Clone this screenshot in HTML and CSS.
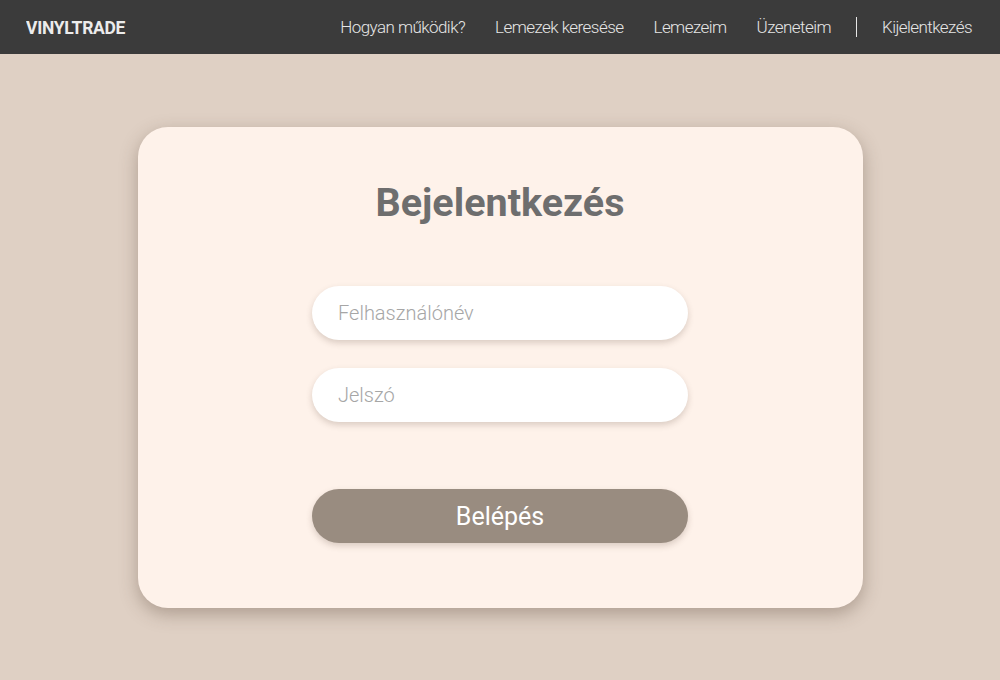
FILE: index.html
```html
<!DOCTYPE html>
<html lang="hu">
<head>
<meta charset="utf-8">
<title>VinylTrade – Bejelentkezés</title>
<link rel="stylesheet" href="styles.css">
</head>
<body>
<header class="navbar">
  <div class="brand">VINYLTRADE</div>
  <nav class="nav-links">
    <a href="#">Hogyan működik?</a>
    <a href="#">Lemezek keresése</a>
    <a href="#">Lemezeim</a>
    <a href="#">Üzeneteim</a>
    <span class="divider"></span>
    <a href="#">Kijelentkezés</a>
  </nav>
</header>
<main class="page">
  <section class="card">
    <h1 class="title">Bejelentkezés</h1>
    <form class="form">
      <input class="field" type="text" placeholder="Felhasználónév">
      <input class="field" type="password" placeholder="Jelszó">
      <button class="submit" type="button">Belépés</button>
    </form>
  </section>
</main>
</body>
</html>
```
FILE: styles.css
```css
* { box-sizing: border-box; }
html, body { margin: 0; padding: 0; }
body {
  background: #dfd0c4;
  font-family: Roboto, "Liberation Sans", sans-serif;
  height: 680px;
}
.navbar {
  height: 54px;
  background: #3b3b3b;
  display: flex;
  align-items: center;
  justify-content: space-between;
  padding: 0 28px 0 26px;
}
.brand {
  color: #ececec;
  font-weight: 700;
  font-size: 19px;
  letter-spacing: -0.3px;
  transform: scaleX(0.92);
  transform-origin: left center;
}
.nav-links {
  display: flex;
  align-items: center;
  gap: 30px;
}
.nav-links a {
  color: #e6e6e6;
  text-decoration: none;
  font-size: 17px;
  font-weight: 300;
  letter-spacing: -0.55px;
}
.divider {
  width: 1px;
  height: 20px;
  background: #e6e6e6;
  margin: 0 -5px;
}
.page {
  display: flex;
  justify-content: center;
  padding-top: 73px;
}
.card {
  width: 725px;
  height: 481px;
  background: #fef2ea;
  border-radius: 30px;
  box-shadow: 0 6px 18px rgba(80, 60, 45, 0.35);
  display: flex;
  flex-direction: column;
  align-items: center;
  padding-top: 53px;
}
.title {
  margin: 0;
  font-size: 39.5px;
  font-weight: 700;
  color: #6e6e6e;
  line-height: 46px;
}
.form {
  display: flex;
  flex-direction: column;
  align-items: center;
  margin-top: 60px;
}
.field {
  width: 376px;
  height: 54px;
  border: none;
  outline: none;
  border-radius: 27px;
  background: #ffffff;
  box-shadow: 0 3px 6px rgba(90, 70, 55, 0.22);
  padding: 0 26px;
  font-family: Roboto, "Liberation Sans", sans-serif;
  font-weight: 300;
  font-size: 20px;
  color: #555;
  margin-bottom: 28px;
}
.field::placeholder { color: #a6a6a6; }
.submit {
  margin-top: 39px;
  width: 376px;
  height: 54px;
  border: none;
  border-radius: 27px;
  background: #998c80;
  color: #ffffff;
  font-family: Roboto, "Liberation Sans", sans-serif;
  font-size: 25px;
  font-weight: 400;
  box-shadow: 0 3px 6px rgba(90, 70, 55, 0.22);
}
```
